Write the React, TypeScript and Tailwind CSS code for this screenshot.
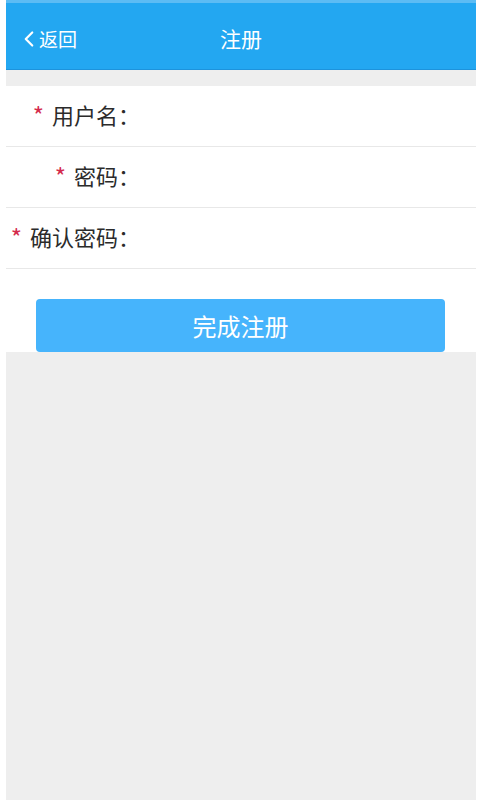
import { ChevronLeft } from "lucide-react";

const fields = [
  { label: "用户名：", type: "text" },
  { label: "密码：", type: "password" },
  { label: "确认密码：", type: "password" },
];

export default function App() {
  return (
    <div
      className="min-h-[800px] bg-white"
      style={{ fontFamily: '"Noto Sans CJK SC", "Noto Sans", sans-serif' }}
    >
      <div className="ml-[6px] flex min-h-[800px] w-[470px] flex-col">
        {/* header */}
        <header className="relative flex h-[70px] items-center border-t-[3px] border-b border-t-[#5cbcf4] border-b-[#1d93dc] bg-[#23a7f1] pt-[6px] text-white">
          <button className="flex items-center pl-[10px] text-[19px]">
            <ChevronLeft className="h-[26px] w-[26px]" strokeWidth={2} />
            <span className="-ml-[3px]">返回</span>
          </button>
          <h1 className="absolute left-1/2 -translate-x-1/2 text-[21px]">注册</h1>
        </header>

        <div className="h-[16px] bg-[#eeeeee]" />

        {/* form rows */}
        <div className="bg-white">
          {fields.map((field, index) => (
            <div
              key={index}
              className="flex h-[61px] items-center border-b border-[#e8e8e8]"
            >
              <label className="flex w-[134px] shrink-0 items-center justify-end pb-[3px] text-[22px] text-[#2b2b2b]">
                <span className="mr-[8px] text-[24px] leading-none text-[#d42a4c]">*</span>
                {field.label}
              </label>
              <input
                type={field.type}
                className="h-full flex-1 bg-transparent text-[20px] outline-none"
              />
            </div>
          ))}
        </div>

        <div className="bg-white px-[30px] pt-[30px]">
          <button className="flex h-[53px] w-[409px] items-center justify-center rounded-[4px] bg-[#46b4fc] text-[24px] text-white">
            完成注册
          </button>
        </div>

        <div className="flex-1 bg-[#eeeeee]" />
      </div>
    </div>
  );
}
